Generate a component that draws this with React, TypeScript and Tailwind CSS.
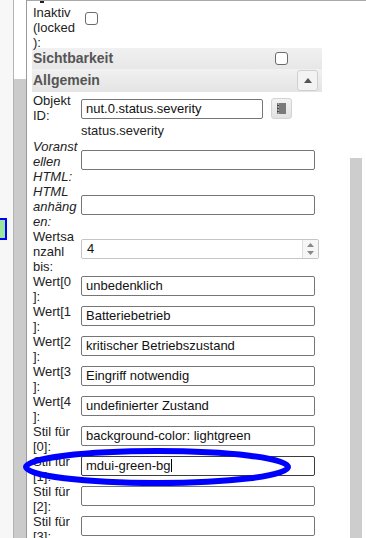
import React from "react";

const font = { fontFamily: '"Liberation Sans", Arial, sans-serif' };

function Label({ lines, italic }: { lines: string[]; italic?: boolean }) {
  return (
    <div className={italic ? "w-[49px] shrink-0 pl-[1px] text-[13px] leading-[15px] italic text-[#222]" : "w-[49px] shrink-0 pl-[1px] text-[13px] leading-[15px] text-[#222]"}>
      {lines.map((l, i) => (
        <div key={i} className="whitespace-nowrap">{l}</div>
      ))}
    </div>
  );
}

function TextInput({ value, focused, cursor }: { value?: string; focused?: boolean; cursor?: boolean }) {
  return (
    <div
      className={
        focused
          ? "w-[234px] h-[20px] border border-[#3c3c3c] rounded-[2px] bg-white pl-[4px] text-[13px] leading-[18px] text-[#111] whitespace-nowrap overflow-hidden"
          : "w-[234px] h-[20px] border border-[#767676] rounded-[2px] bg-white pl-[4px] text-[13px] leading-[18px] text-[#111] whitespace-nowrap overflow-hidden"
      }
    >
      {value}
      {cursor && <span className="inline-block w-px h-[13px] bg-black align-[-2px]" />}
    </div>
  );
}

function Row2({ lines, value, focused, cursor }: { lines: string[]; value?: string; focused?: boolean; cursor?: boolean }) {
  return (
    <div className="flex items-start">
      <Label lines={lines} />
      <div className="mt-[2px]">
        <TextInput value={value} focused={focused} cursor={cursor} />
      </div>
    </div>
  );
}

export default function App() {
  return (
    <div className="relative w-[366px] h-[538px] overflow-hidden bg-white flex" style={font}>
      {/* left strip */}
      <div className="w-[13px] h-full bg-[#f7f7f7] shrink-0">
        <div className="mt-[218px] w-[7px] h-[22px] bg-[#9be69b] border-2 border-l-0 border-[#0000ff]" />
      </div>
      <div className="w-px h-full bg-[#b4b4b4] shrink-0" />
      <div className="w-[12px] h-full shrink-0 flex flex-col">
        <div className="h-[79px] bg-white" />
        <div className="flex-1 bg-[#cbcbcb]" />
      </div>
      <div className="w-px h-full bg-[#9a9a9a] shrink-0" />

      {/* panel */}
      <div className="flex-1 h-full border-t border-[#a8a8a8] flex">
        <div className="w-[323px] shrink-0 pl-[5px] relative">
          <div className="absolute left-[13px] top-0 w-[4px] h-[2px] bg-[#222]" />
          {/* Inaktiv */}
          <div className="h-[47px] flex items-start">
            <div className="mt-[4px]">
              <Label lines={["Inaktiv", "(locked", "):"]} />
            </div>
            <div className="mt-[11px] ml-[4px] w-[13px] h-[13px] border border-[#6b6b6b] rounded-[3px] bg-white" />
          </div>
          {/* headers */}
          <div className="w-[290px] h-[21px] bg-gradient-to-b from-[#f1f1f1] to-[#e7e7e7] flex items-center justify-between pl-[1px] pr-[34px]">
            <span className="text-[14px] font-bold text-[#555]">Sichtbarkeit</span>
            <div className="w-[13px] h-[13px] border border-[#6b6b6b] rounded-[3px] bg-white" />
          </div>
          <div className="w-[290px] h-[23px] bg-gradient-to-b from-[#f1f1f1] to-[#e4e4e4] flex items-center justify-between pl-[1px] pr-[4px]">
            <span className="text-[14px] font-bold text-[#555]">Allgemein</span>
            <div className="w-[21px] h-[21px] border border-[#cfcfcf] rounded-[3px] bg-[#f3f3f3] flex items-center justify-center">
              <svg width="8" height="5" viewBox="0 0 8 5"><path d="M0 5 L4 0 L8 5 Z" fill="#555" /></svg>
            </div>
          </div>
          {/* Objekt ID */}
          <div className="flex items-start pt-[1px]">
            <Label lines={["Objekt", "ID:"]} />
            <div className="mt-[5px] flex items-center">
              <div className="w-[182px] h-[20px] border border-[#767676] rounded-[2px] bg-white pl-[4px] text-[13px] leading-[18px] text-[#111]">
                nut.0.status.severity
              </div>
              <div className="ml-[8px] w-[21px] h-[21px] border border-[#d3d3d3] rounded-[3px] bg-gradient-to-b from-[#f2f2f2] to-[#e2e2e2] flex items-center justify-center">
                <svg width="9" height="11" viewBox="0 0 9 11">
                  <rect x="0" y="0" width="9" height="11" fill="#7a7a7a" />
                  <rect x="1" y="0" width="1" height="11" fill="#a8a8a8" />
                  <rect x="0" y="2" width="2" height="1" fill="#444" />
                  <rect x="0" y="5" width="2" height="1" fill="#444" />
                  <rect x="0" y="8" width="2" height="1" fill="#444" />
                </svg>
              </div>
            </div>
          </div>
          {/* status.severity */}
          <div className="h-[16px] pl-[49px] text-[13px] leading-[15px] text-[#222]">status.severity</div>
          {/* Voranstellen */}
          <div className="flex items-start">
            <Label lines={["Voranst", "ellen", "HTML:"]} italic />
            <div className="mt-[11px]"><TextInput /></div>
          </div>
          <div className="flex items-start">
            <Label lines={["HTML", "anhäng", "en:"]} italic />
            <div className="mt-[11px]"><TextInput /></div>
          </div>
          <div className="flex items-start">
            <Label lines={["Wertsa", "nzahl", "bis:"]} />
            <div className="mt-[10px] w-[238px] h-[20px] border border-[#c5c5c5] rounded-[2px] bg-white flex">
              <div className="flex-1 pl-[5px] text-[13px] leading-[18px] text-[#111]">4</div>
              <div className="w-[16px] h-full border-l border-[#dedede] bg-[#f6f6f6] flex flex-col items-center justify-center gap-[4px]">
                <svg width="7" height="4" viewBox="0 0 7 4"><path d="M0 4 L3.5 0 L7 4 Z" fill="#888" /></svg>
                <svg width="7" height="4" viewBox="0 0 7 4"><path d="M0 0 L3.5 4 L7 0 Z" fill="#888" /></svg>
              </div>
            </div>
          </div>
          <Row2 lines={["Wert[0", "]:"]} value="unbedenklich" />
          <Row2 lines={["Wert[1", "]:"]} value="Batteriebetrieb" />
          <Row2 lines={["Wert[2", "]:"]} value="kritischer Betriebszustand" />
          <Row2 lines={["Wert[3", "]:"]} value="Eingriff notwendig" />
          <Row2 lines={["Wert[4", "]:"]} value="undefinierter Zustand" />
          <Row2 lines={["Stil für", "[0]:"]} value="background-color: lightgreen" />
          <Row2 lines={["Stil für", "[1]:"]} value="mdui-green-bg" focused cursor />
          <Row2 lines={["Stil für", "[2]:"]} />
          <Row2 lines={["Stil für", "[3]:"]} />
        </div>
        <div className="w-[12px] shrink-0 mt-[157px] bg-[#cdcdcd]" />
      </div>

      {/* annotation */}
      <svg className="absolute left-0 top-0 pointer-events-none" width="366" height="538" viewBox="0 0 366 538">
        <ellipse cx="157" cy="467" rx="131" ry="16" fill="none" stroke="#0000ff" strokeWidth="6" />
      </svg>
    </div>
  );
}
